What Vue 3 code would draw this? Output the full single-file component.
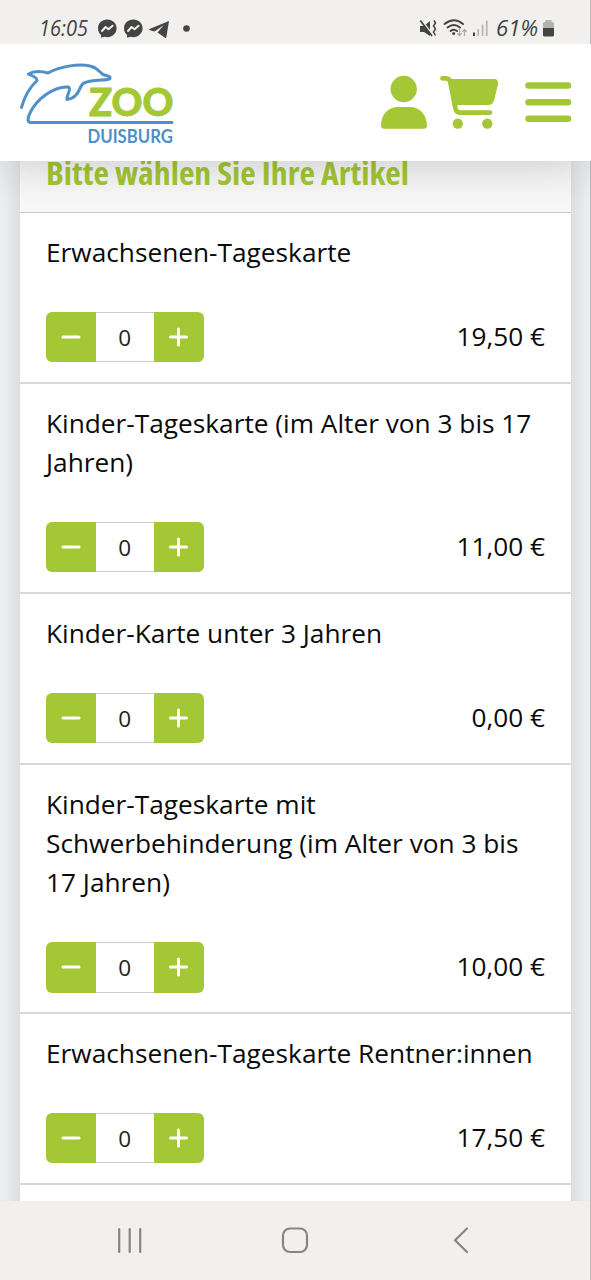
<script setup>
import { ref } from 'vue'

const items = ref([
  { lines: ['Erwachsenen-Tageskarte'], price: '19,50 €', count: 0 },
  { lines: ['Kinder-Tageskarte (im Alter von 3 bis 17', 'Jahren)'], price: '11,00 €', count: 0 },
  { lines: ['Kinder-Karte unter 3 Jahren'], price: '0,00 €', count: 0 },
  { lines: ['Kinder-Tageskarte mit', 'Schwerbehinderung (im Alter von 3 bis', '17 Jahren)'], price: '10,00 €', count: 0 },
  { lines: ['Erwachsenen-Tageskarte Rentner:innen'], price: '17,50 €', count: 0 },
])
</script>

<template>
  <div class="screen">
    <div class="status">
      <svg width="591" height="44" viewBox="0 0 591 44">
        <g class="hand">
          <text x="39" y="35.500" font-size="21" textLength="49" lengthAdjust="spacingAndGlyphs">16:05</text>
          <text x="496" y="35.500" font-size="21" textLength="42" lengthAdjust="spacingAndGlyphs">61%</text>
        </g>
        <g v-for="x in [98, 124]" :key="x" :transform="`translate(${x} 19.5)`">
          <path d="M9.300 0C4 0 0 3.800 0 8.800c0 2.700 1 4.900 3 6.500L3.200 18.200 6.300 17.200C12.500 19 18.600 15 18.600 8.800 18.600 3.800 14.600 0 9.300 0Z" fill="#444" />
          <path d="M4 11.500 7.600 7.500 10.500 9.700 14.600 6.200" fill="none" stroke="#f1f0ee" stroke-width="2" stroke-linejoin="round" stroke-linecap="round" />
        </g>
        <path d="M169 21 149.500 29Q148.500 29.700 150 30.300L154.500 31.500 163.500 25.300 157.500 32.500 165 37.800Q166 38.200 166.400 37Z" fill="#444" />
        <circle cx="186.500" cy="28.500" r="3.300" fill="#444" />

        <path d="M420 26h4l6-5v15l-6-4h-4Z" fill="#444" />
        <path d="M421 19.500 433 35" stroke="#f1f0ee" stroke-width="1.500" />
        <path d="M420.300 20.500 432 36" stroke="#444" stroke-width="1.700" />
        <path d="M434 20.500l1.500 2.500-2 3 2 3-2 3 2 3.500" fill="none" stroke="#444" stroke-width="1.500" />

        <g fill="none" stroke="#444" stroke-width="2" stroke-linecap="round">
          <path d="M444.500 24Q454 16.500 463 24" />
          <path d="M447.500 27.500Q454 22.500 460 27.500" />
          <path d="M450.500 31Q454 28.500 457 31" />
        </g>
        <circle cx="453.700" cy="33.500" r="1.500" fill="#444" />
        <path d="M459.500 28.500v7M457.300 33.300l2.200 2.200 2.200-2.200M464.500 36v-6.500M462.300 31.700l2.200-2.200 2.200 2.200" fill="none" stroke="#aaa" stroke-width="1.300" />
        <rect x="473" y="32.500" width="2" height="3.500" fill="#444" />
        <path d="M478.300 29v7M482.600 24.500V36M486.700 20.500V36" stroke="#b4b4b3" stroke-width="1.700" />
        <path d="M543 28v-4.500q0-1.500 1.500-1.500h1v-2h6v2h1q1.500 0 1.500 1.500V28Z" fill="#b3b3b2" />
        <path d="M543 28h11v7q0 1.500-1.500 1.500h-8q-1.500 0-1.500-1.500Z" fill="#444" />
      </svg>
    </div>

    <header class="header">
      <svg width="591" height="117" viewBox="0 44 591 117">
        <g fill="none" stroke="#5090c8" stroke-width="3" stroke-linecap="round" stroke-linejoin="round">
          <path d="M21.500 107.500C24 98 28 89 37 80.500 37 77 32 75.500 28.500 74 34 70.500 41 71 48 73 59 67 78 63 90 66 97 67.500 99 71.500 103 74.500 107 76 111 76 110 78.500 107 81 94 79 84 83 79 85 80 98 67 99.500 66 95 72 90 68.500 87 53 86 36 100 30 113 27 119 27.500 122.500 31 122.500H172" />
        </g>
        <text class="zoo" x="89" y="115.500" font-size="37" textLength="84.500" lengthAdjust="spacingAndGlyphs">ZOO</text>
        <text class="city" x="87.500" y="142.500" font-size="18" textLength="85.500" lengthAdjust="spacingAndGlyphs">DUISBURG</text>

        <g fill="#a4c736">
          <circle cx="403.700" cy="89" r="13.200" />
          <path d="M381 126.500C380.500 114 389 107 398 107H410C420 107 427 115 427 126.500Q426.500 128.700 424 128.700H384Q381.500 128.700 381 126.500Z" />
          <path d="M448 79H494.500Q499 79.500 498 84.500L494 100.500Q492.500 105 488 105H454Z" />
          <circle cx="457.800" cy="123.600" r="5.200" />
          <circle cx="487.300" cy="123.600" r="5.200" />
        </g>
        <path d="M442.500 78.300H446Q449.500 78.500 450.200 81.500L455.500 108.500Q456.500 112.600 460 112.600H490" fill="none" stroke="#a4c736" stroke-width="4.800" stroke-linecap="round" stroke-linejoin="round" />
        <path d="M528.500 85.500H568M528.500 102.300H568M528.500 118.700H568" stroke="#a4c736" stroke-width="6.600" stroke-linecap="round" />
      </svg>
    </header>

    <main class="content">
      <section class="card">
        <div class="heading">
          <svg width="551" height="51" viewBox="20 161 551 51">
            <text class="title" x="46" y="185" font-size="32.500" textLength="363" lengthAdjust="spacingAndGlyphs">Bitte wählen Sie Ihre Artikel</text>
          </svg>
        </div>
        <div v-for="item in items" :key="item.lines[0]" class="row">
          <div class="name">
            <div v-for="line in item.lines" :key="line">{{ line }}</div>
          </div>
          <div class="buy">
            <div class="stepper">
              <button class="btn minus" @click="item.count = Math.max(0, item.count - 1)">
                <svg width="20" height="20" viewBox="0 0 20 20"><path d="M2 10H18" /></svg>
              </button>
              <span class="count">{{ item.count }}</span>
              <button class="btn plus" @click="item.count++">
                <svg width="20" height="20" viewBox="0 0 20 20"><path d="M1.500 10H17.500M9.500 2V18" /></svg>
              </button>
            </div>
            <span class="price">{{ item.price }}</span>
          </div>
        </div>
      </section>
    </main>

    <nav class="nav">
      <svg width="591" height="79" viewBox="0 1201 591 79">
        <g fill="none" stroke="#858584" stroke-width="2.200" stroke-linecap="round" stroke-linejoin="round">
          <path d="M119.200 1229v23M129.700 1229v23M140.200 1229v23" />
          <rect x="283" y="1228.500" width="24" height="23.500" rx="7" />
          <path d="M467 1228.500 455 1240.200 467 1252" />
        </g>
      </svg>
    </nav>
    <div class="edge"></div>
  </div>
</template>

<style>
body {
  margin: 0;
}
</style>

<style scoped>
.screen {
  position: relative;
  display: flex;
  flex-direction: column;
  width: 591px;
  height: 1280px;
  overflow: hidden;
  background: #fff;
  font-family: "Open Sans", "Noto Sans", sans-serif;
  color: #0a0a0a;
}
svg {
  display: block;
}
.status {
  height: 44px;
  flex: none;
  background: #f1f0ee;
}
.hand {
  font-family: "Open Sans", sans-serif;
  font-style: italic;
  fill: #444;
}
.header {
  position: relative;
  z-index: 2;
  height: 117px;
  flex: none;
  background: #fff;
  box-shadow: 0 0 50px rgba(0, 0, 0, 0.22);
  clip-path: inset(0 0 -60px 0);
}
.zoo {
  font-family: Lato, sans-serif;
  font-weight: 900;
  fill: #a4c736;
  stroke: #a4c736;
  stroke-width: 0.8;
}
.city {
  font-family: Lato, sans-serif;
  font-weight: 700;
  fill: #5090c8;
}
.content {
  flex: 1;
  min-height: 0;
  overflow: hidden;
  padding: 0 20px;
  background: #f0f1f3;
}
.card {
  min-height: 1080px;
  background: #fff;
  box-shadow: 0 0 26px rgba(0, 0, 0, 0.16);
}
.heading {
  height: 51px;
  background: #f8f8f8;
  border-bottom: 1px solid #c8c8c8;
}
.title {
  font-weight: 700;
  font-stretch: 75%;
  fill: #a4c736;
}
.row {
  box-sizing: border-box;
  padding: 19.8px 26px 19.7px;
  border-bottom: 2px solid #d8d8d8;
}
.name {
  font-size: 26.25px;
  line-height: 39.4px;
  white-space: nowrap;
}
.buy {
  display: flex;
  justify-content: space-between;
  align-items: center;
  margin-top: 39.4px;
}
.stepper {
  display: flex;
  width: 157.5px;
  height: 50.5px;
}
.btn {
  display: flex;
  align-items: center;
  justify-content: center;
  width: 50px;
  padding: 0;
  border: 0;
  background: #a4c736;
}
.btn path {
  fill: none;
  stroke: #fff;
  stroke-width: 3;
  stroke-linecap: round;
}
.minus {
  border-radius: 6px 0 0 6px;
}
.plus {
  border-radius: 0 6px 6px 0;
}
.count {
  box-sizing: border-box;
  flex: 1;
  border: solid #ccc;
  border-width: 1px 0;
  text-align: center;
  font-size: 22.5px;
  line-height: 49px;
  color: #222;
}
.price {
  margin-bottom: 2px;
  font-size: 26.2px;
  line-height: 48px;
}
.nav {
  position: relative;
  height: 79px;
  flex: none;
  background: #f1f0ee;
}
.edge {
  position: absolute;
  top: 0;
  right: 0;
  width: 1px;
  height: 1280px;
  background: #bbb;
}
</style>
